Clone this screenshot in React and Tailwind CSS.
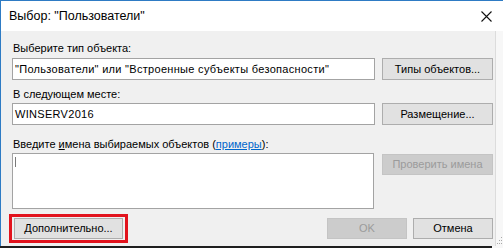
// App.jsx — диалог выбора объектов Windows
const font = { fontFamily: '"Liberation Sans", Arial, sans-serif' }

function Button({ children, disabled = false, className = '' }) {
  return (
    <div
      className={`flex items-center justify-center border text-[11px] leading-none ${
        disabled
          ? 'bg-[#cccccc] border-[#c4c4c4] text-[#9b9b9b]'
          : 'bg-[#e1e1e1] border-[#adadad] text-black'
      } ${className}`}
    >
      {children}
    </div>
  )
}

function Field({ children, className = '' }) {
  return (
    <div
      className={`flex items-center bg-white border border-[#a3a3a3] pl-[2px] text-[11px] tracking-[0.3px] text-black whitespace-nowrap overflow-hidden ${className}`}
    >
      {children}
    </div>
  )
}

export default function App() {
  return (
    <div className="w-[503px] h-[248px] flex flex-col bg-[#f7f7f7] overflow-hidden" style={font}>
      {/* заголовок окна */}
      <div className="h-[31px] flex items-center justify-between bg-white border-t border-l border-[#2e7bc4] pl-[8px] pr-[10px] flex-shrink-0">
        <span className="text-[12.5px] text-black">Выбор: "Пользователи"</span>
        <svg width="11" height="11" viewBox="0 0 11 11" className="mr-[1px]">
          <path d="M0.5 0.5L10.5 10.5M10.5 0.5L0.5 10.5" stroke="#111" strokeWidth="1.1" />
        </svg>
      </div>

      <div className="flex flex-1 min-h-0">
        <div className="w-[495px] flex flex-col bg-[#f0f0f0] border-l border-[#2e7bc4] pl-[11px] pt-[11px]">
          <div className="h-[13px] leading-[13px] text-[11px] text-black pl-[1px]">Выберите тип объекта:</div>
          <div className="flex mt-[3px] h-[22px]">
            <Field className="w-[363px] h-full">"Пользователи" или "Встроенные субъекты безопасности"</Field>
            <Button className="ml-[7px] w-[111px] h-full">Типы объектов...</Button>
          </div>

          <div className="h-[13px] leading-[13px] text-[11px] text-black pl-[1px] mt-[8px]">В следующем месте:</div>
          <div className="flex mt-[2px] h-[22px]">
            <Field className="w-[363px] h-full">WINSERV2016</Field>
            <Button className="ml-[7px] w-[111px] h-full">Размещение...</Button>
          </div>

          <div className="h-[13px] leading-[13px] text-[11px] text-black pl-[1px] mt-[13px]">
            Введите <span className="underline">и</span>мена выбираемых объектов (<span className="text-[#0066cc] underline">примеры</span>):
          </div>
          <div className="flex items-start mt-[2px] h-[56px]">
            <div className="w-[362px] h-full bg-white border border-[#a3a3a3] pt-[3px] pl-[2px]">
              <div className="w-[1px] h-[10px] bg-[#7a7a7a]" />
            </div>
            <Button disabled className="ml-[8px] mt-[1px] w-[111px] h-[21px]">Проверить имена</Button>
          </div>

          <div className="flex items-center mt-[9px] h-[21px]">
            <div className="relative ml-[2px]">
              <Button className="w-[109px] h-[21px]">Дополнительно...</Button>
              <div className="absolute -left-[5px] -top-[4px] w-[119px] h-[29px] border-[3px] border-[#e2131d]" />
            </div>
            <Button disabled className="ml-[204px] w-[80px] h-[21px]">OK</Button>
            <Button className="ml-[6px] w-[80px] h-[21px]">Отмена</Button>
          </div>
        </div>
        <div className="w-[1px] bg-[#dcdcdc]" />
        <div className="flex-1 flex flex-col justify-end pb-[1px] pl-[1px]">
          <svg width="6" height="8" viewBox="0 0 6 8">
            <rect x="4" y="0" width="1" height="1" fill="#a8a8a8" />
            <rect x="2" y="3" width="1" height="1" fill="#a8a8a8" />
            <rect x="4" y="3" width="1" height="1" fill="#a8a8a8" />
            <rect x="0" y="6" width="1" height="1" fill="#a8a8a8" />
            <rect x="2" y="6" width="1" height="1" fill="#a8a8a8" />
            <rect x="4" y="6" width="1" height="1" fill="#a8a8a8" />
          </svg>
        </div>
      </div>
      <div className="h-[2px] w-[492px] bg-[#1f1f1f] flex-shrink-0" />
    </div>
  )
}
